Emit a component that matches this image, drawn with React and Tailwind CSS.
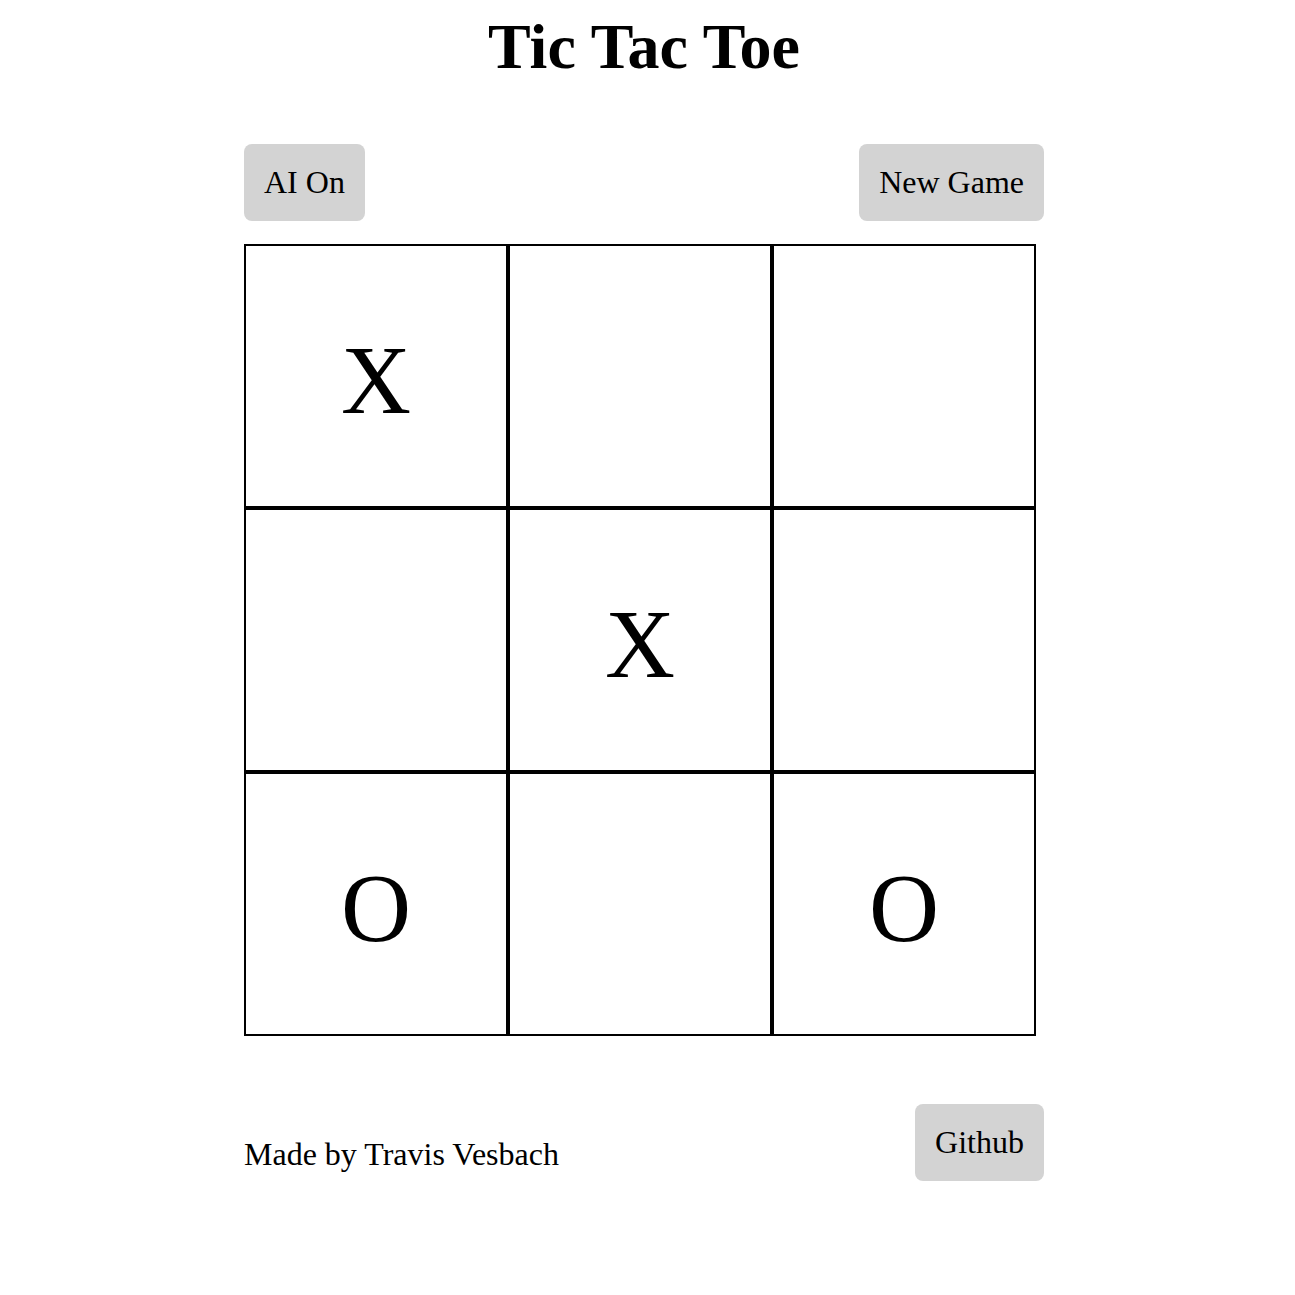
const board = ['X', '', '', '', 'X', '', 'O', '', 'O'];

const Button = ({ children }) => (
  <button
    type="button"
    className="rounded-lg bg-[#d3d3d3] px-5 py-5 text-[32px] leading-[normal] text-black"
  >
    {children}
  </button>
);

const App = () => {
  return (
    <div
      className="flex min-h-screen justify-center bg-white pr-[7px] text-black"
      style={{ fontFamily: '"Liberation Serif", "Times New Roman", serif' }}
    >
      <div className="w-[800px]">
        <h1 className="mt-[10px] text-center text-[64px] font-bold leading-[normal]">Tic Tac Toe</h1>

        <div className="mt-[60px] flex justify-between">
          <Button>AI On</Button>
          <Button>New Game</Button>
        </div>

        <div className="mt-[23px] grid w-[792px] grid-cols-3">
          {board.map((v, i) => (
            <div
              key={i}
              className="flex h-[264px] w-[264px] items-center justify-center border-2 border-black pt-[8px] text-[97px] leading-[normal]"
            >
              {v}
            </div>
          ))}
        </div>

        <footer className="mt-[68px] flex items-start justify-between">
          <p className="mt-[32px] text-[32px] leading-[normal]">Made by Travis Vesbach</p>
          <Button>Github</Button>
        </footer>
      </div>
    </div>
  );
};

export default App;
